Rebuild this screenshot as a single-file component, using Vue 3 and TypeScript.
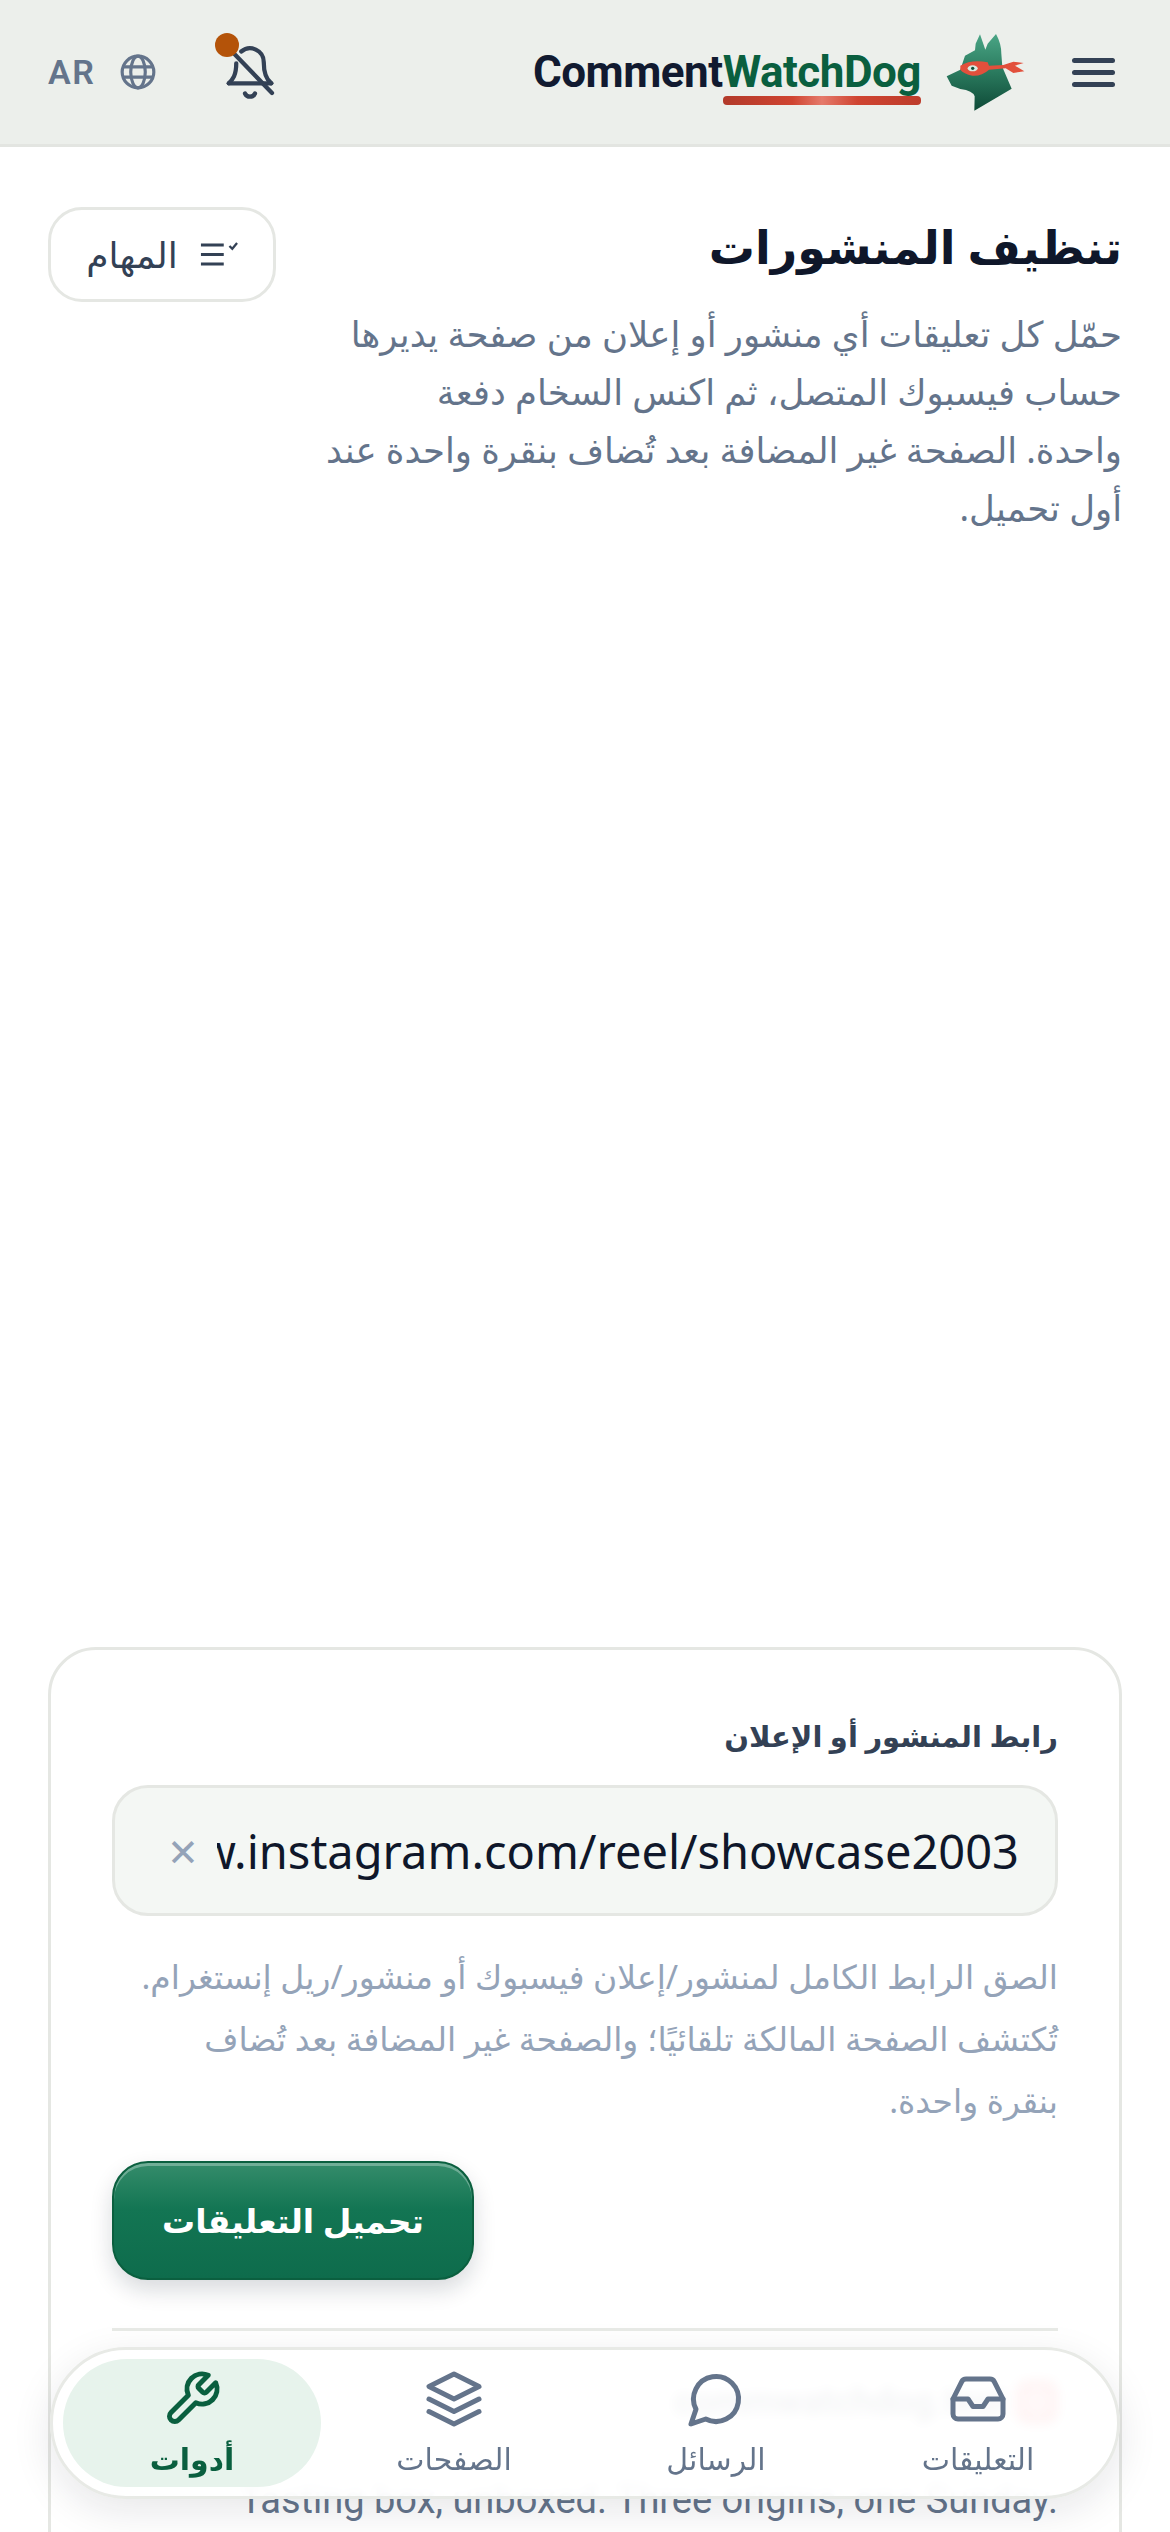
<script setup lang="ts">
import { ref } from 'vue'

// Bottom navigation entries, right to left
const navItems = [
  { key: 'comments', label: 'التعليقات' },
  { key: 'messages', label: 'الرسائل' },
  { key: 'pages', label: 'الصفحات' },
  { key: 'tools', label: 'أدوات' },
]

const activeNav = ref('tools')
const postUrl = ref('https://www.instagram.com/reel/showcase2003')
</script>

<template>
  <div class="app" dir="rtl">
    <header class="topbar">
      <div class="brand">
        <button class="menu" aria-label="menu"><i></i><i></i><i></i></button>
        <svg class="dog" viewBox="130 65 240 240" aria-hidden="true">
          <defs>
            <linearGradient id="dogFill" x1="0" y1="0" x2="0" y2="1">
              <stop offset="0" stop-color="#4aa585" />
              <stop offset="0.5" stop-color="#2a7a5e" />
              <stop offset="1" stop-color="#0e4a37" />
            </linearGradient>
          </defs>
          <path d="M135 198 L176 178 L190 136 L220 120 L222 100 L235 72 L251 118 L258 100 L283 71 Q299 100 299 130 L302 170 L330 235 L218 301 L219 258 Q214 241 176 236 L150 226 Z" fill="url(#dogFill)" />
          <path d="M176 166 Q210 146 258 156 L262 166 L305 164 L335 154 L366 158 L340 166 L368 183 L335 188 L312 174 L262 178 Q240 198 212 196 Q186 190 176 178 Z" fill="#e2503c" />
          <ellipse cx="213" cy="174" rx="15" ry="9" fill="#d8ece2" />
          <circle cx="213" cy="174" r="5" fill="#0f4f3a" />
        </svg>
        <div class="wordmark" dir="ltr">
          <span class="word-dark">Comment</span><span class="word-green">WatchDog</span>
        </div>
      </div>
      <div class="top-actions">
        <button class="bell" aria-label="notifications">
          <svg viewBox="0 0 24 24" class="bell-icon">
            <path d="M3.5 16.5h17" />
            <path d="M3.5 16.5c1.6-1.5 3-3.2 3-8" />
            <path d="M20.5 16.5c-2-1.5-3-4-3-8.5a5.5 5.5 0 0 0-9-4.2" />
            <path d="M10 20.6a2.2 2.2 0 0 0 4 0" />
            <path d="M5 4l15.8 16.4" />
          </svg>
          <span class="dot"></span>
        </button>
        <button class="lang">
          <svg viewBox="0 0 24 24" class="globe">
            <circle cx="12" cy="12" r="10" />
            <ellipse cx="12" cy="12" rx="4.6" ry="10" />
            <path d="M2.8 8.8h18.4M2.8 15.2h18.4" />
          </svg>
          <span>AR</span>
        </button>
      </div>
    </header>

    <main class="page">
      <section class="page-head">
        <div class="intro">
          <h1>تنظيف المنشورات</h1>
          <p>حمّل كل تعليقات أي منشور أو إعلان من صفحة يديرها حساب فيسبوك المتصل، ثم اكنس السخام دفعة<br />واحدة. الصفحة غير المضافة بعد تُضاف بنقرة واحدة عند أول تحميل.</p>
        </div>
        <button class="tasks">
          <svg viewBox="0 0 40 26" class="tasks-icon">
            <path d="M1 3h24M1 13h24M1 23h24" />
            <path d="M31 4l3 3 5-6" class="tick" />
          </svg>
          <span>المهام</span>
        </button>
      </section>

      <section class="card">
        <label class="field-label">رابط المنشور أو الإعلان</label>
        <div class="url-field">
          <div class="url-clip" dir="ltr"><span>{{ postUrl }}</span></div>
          <button class="clear" aria-label="clear">✕</button>
        </div>
        <p class="hint">الصق الرابط الكامل لمنشور/إعلان فيسبوك أو منشور/ريل إنستغرام. تُكتشف الصفحة المالكة تلقائيًا؛ والصفحة غير المضافة بعد تُضاف بنقرة واحدة.</p>
        <button class="load">تحميل التعليقات</button>
        <hr class="divider" />
        <div class="post-source">
          <span class="ig">
            <svg viewBox="0 0 24 24"><rect x="4" y="4" width="16" height="16" rx="4" /><circle cx="12" cy="12" r="3.6" /></svg>
          </span>
          <span class="handle" dir="ltr">commwatchdog.test</span>
        </div>
        <p class="post-text" dir="ltr">Tasting box, unboxed. Three origins, one Sunday.</p>
      </section>
    </main>

    <nav class="tabbar">
      <a
        v-for="item in navItems"
        :key="item.key"
        class="tab"
        :class="{ active: item.key === activeNav }"
      >
        <svg viewBox="0 0 24 24" class="tab-icon">
          <template v-if="item.key === 'comments'">
            <polyline points="22 12 16 12 14 15 10 15 8 12 2 12" />
            <path d="M5.45 5.11 2 12v6a2 2 0 0 0 2 2h16a2 2 0 0 0 2-2v-6l-3.45-6.89A2 2 0 0 0 16.76 4H7.24a2 2 0 0 0-1.79 1.11z" />
          </template>
          <path v-else-if="item.key === 'messages'" d="M7.9 20A9 9 0 1 0 4 16.1L2 22Z" />
          <template v-else-if="item.key === 'pages'">
            <polygon points="12 2 2 7 12 12 22 7 12 2" />
            <polyline points="2 17 12 22 22 17" />
            <polyline points="2 12 12 17 22 12" />
          </template>
          <path v-else d="M14.7 6.3a1 1 0 0 0 0 1.4l1.6 1.6a1 1 0 0 0 1.4 0l3.77-3.77a6 6 0 0 1-7.94 7.94l-6.91 6.91a2.12 2.12 0 0 1-3-3l6.91-6.91a6 6 0 0 1 7.94-7.94l-3.76 3.76z" />
        </svg>
        <span>{{ item.label }}</span>
      </a>
    </nav>
  </div>
</template>

<style>
html,
body {
  margin: 0;
  background: #ffffff;
}
</style>

<style scoped>
.app {
  position: relative;
  height: 2532px;
  overflow: hidden;
  background: #ffffff;
  font-family: 'Noto Sans', 'DejaVu Sans', sans-serif;
  color: #0f172a;
}

button {
  border: none;
  background: none;
  padding: 0;
  font-family: inherit;
  color: inherit;
}

.topbar {
  display: flex;
  align-items: center;
  justify-content: space-between;
  box-sizing: border-box;
  height: 147px;
  padding: 0 55px 0 48px;
  background: #ecefeb;
  border-bottom: 3px solid #e3e5e1;
}

.brand {
  display: flex;
  align-items: center;
}

.menu {
  display: flex;
  flex-direction: column;
  gap: 7px;
  width: 43px;
}

.menu i {
  display: block;
  height: 5px;
  border-radius: 3px;
  background: #334155;
}

.dog {
  width: 80px;
  height: 80px;
  margin: 0 47px 0 24px;
}

.wordmark {
  position: relative;
  font-family: 'Roboto', sans-serif;
  font-size: 44px;
  font-weight: 700;
  letter-spacing: -0.5px;
  line-height: 52px;
  padding-bottom: 12px;
  margin-top: 12px;
}

.word-dark {
  color: #111a30;
}

.word-green {
  position: relative;
  color: #0a5f3f;
}

.word-green::after {
  content: '';
  position: absolute;
  left: 0;
  right: 0;
  top: 50px;
  height: 9px;
  border-radius: 4px;
  background: linear-gradient(90deg, #b23a2a, #cf4431 35%, #e57a6b 50%, #cf4431 68%, #bd3c2b);
}

.top-actions {
  display: flex;
  align-items: center;
  gap: 63px;
}

.bell {
  position: relative;
  width: 60px;
  height: 60px;
}

.bell-icon {
  display: block;
  width: 60px;
  height: 60px;
  fill: none;
  stroke: #334155;
  stroke-width: 1.7;
  stroke-linecap: round;
  stroke-linejoin: round;
}

.dot {
  position: absolute;
  left: -5px;
  top: -9px;
  width: 24px;
  height: 24px;
  border-radius: 50%;
  background: #b45309;
}

.lang {
  display: flex;
  align-items: center;
  gap: 24px;
  font-family: 'Roboto', sans-serif;
  font-size: 34px;
  font-weight: 600;
  letter-spacing: 1.5px;
  color: #64748b;
}

.globe {
  width: 38px;
  height: 38px;
  fill: none;
  stroke: #64748b;
  stroke-width: 2;
}

.page {
  padding: 60px 48px 0;
}

.page-head {
  display: flex;
  justify-content: space-between;
  align-items: flex-start;
  gap: 24px;
  min-height: 1440px;
}

.intro {
  flex: 1;
}

h1 {
  margin: 0;
  font-size: 46px;
  font-weight: 700;
  line-height: 78px;
  color: #0f172a;
}

.intro p {
  margin: 19px 0 0;
  font-size: 35.5px;
  line-height: 58px;
  color: #64748b;
}

.tasks {
  flex: none;
  display: flex;
  align-items: center;
  justify-content: center;
  gap: 22px;
  box-sizing: border-box;
  width: 228px;
  height: 95px;
  border: 3px solid #e5e7e3;
  border-radius: 34px;
  font-size: 36px;
  font-weight: 500;
  color: #334155;
  background: #ffffff;
}

.tasks-icon {
  width: 38px;
  height: 25px;
  fill: none;
  stroke: #334155;
  stroke-width: 3;
}

.tasks-icon .tick {
  stroke-width: 2.4;
}

.card {
  box-sizing: border-box;
  height: 1200px;
  padding: 62px 61px;
  border: 3px solid #e5e7e3;
  border-radius: 48px;
}

.field-label {
  display: block;
  font-size: 29px;
  font-weight: 600;
  line-height: 48px;
  color: #334155;
}

.url-field {
  display: flex;
  align-items: center;
  box-sizing: border-box;
  height: 131px;
  margin-top: 25px;
  padding: 0 36px 0 52px;
  background: #f4f7f4;
  border: 3px solid #e5e7e3;
  border-radius: 36px;
}

.url-clip {
  flex: 1;
  display: flex;
  justify-content: flex-end;
  overflow: hidden;
  white-space: nowrap;
  font-size: 47px;
  color: #0f172a;
}

.clear {
  flex: none;
  margin-right: 18px;
  font-size: 38px;
  color: #94a3b8;
}

.hint {
  max-width: 925px;
  margin: 30px 0 0;
  font-size: 33px;
  line-height: 62px;
  color: #94a3b8;
}

.load {
  display: block;
  box-sizing: border-box;
  width: 362px;
  height: 119px;
  margin-top: 29px;
  margin-right: auto;
  border: 2px solid #0b5f3f;
  border-radius: 36px;
  background: linear-gradient(180deg, #358c6b 0%, #137553 40%, #0e6c4c 100%);
  box-shadow: inset 0 3px 0 rgba(255, 255, 255, 0.3), 0 10px 22px rgba(15, 23, 42, 0.16);
  font-size: 33px;
  font-weight: 600;
  color: #ffffff;
}

.divider {
  height: 3px;
  margin: 48px 0 0;
  border: none;
  background: #e8eae6;
}

.post-source {
  display: flex;
  align-items: center;
  gap: 10px;
  margin-top: 49px;
}

.ig {
  display: flex;
  align-items: center;
  justify-content: center;
  width: 42px;
  height: 44px;
  border-radius: 12px;
  background: #ef4444;
}

.ig svg {
  width: 30px;
  height: 30px;
  fill: none;
  stroke: #ffffff;
  stroke-width: 2;
}

.handle {
  font-family: 'Roboto', sans-serif;
  font-size: 36px;
  font-weight: 600;
  color: #334155;
}

.post-text {
  margin: 48px 0 0;
  text-align: right;
  font-family: 'Roboto', sans-serif;
  font-size: 38px;
  line-height: 56px;
  color: #64748b;
}

.tabbar {
  position: fixed;
  left: 50px;
  top: 2347px;
  width: 1070px;
  height: 152px;
  box-sizing: border-box;
  display: grid;
  grid-template-columns: repeat(4, 1fr);
  gap: 4px;
  padding: 9px 10px;
  border: 3px solid #e8eae6;
  border-radius: 76px;
  background: rgba(255, 255, 255, 0.94);
  backdrop-filter: blur(6px);
  box-shadow: 0 12px 40px rgba(15, 23, 42, 0.1);
}

.tab {
  display: flex;
  flex-direction: column;
  align-items: center;
  justify-content: center;
  gap: 9px;
  padding-top: 2px;
  border-radius: 66px;
  font-size: 30px;
  font-weight: 500;
  line-height: 42px;
  color: #64748b;
}

.tab.active {
  background: #e7f3ec;
  color: #0a5f3f;
  font-weight: 600;
}

.tab-icon {
  width: 60px;
  height: 60px;
  fill: none;
  stroke: currentColor;
  stroke-width: 2;
  stroke-linecap: round;
  stroke-linejoin: round;
}
</style>
